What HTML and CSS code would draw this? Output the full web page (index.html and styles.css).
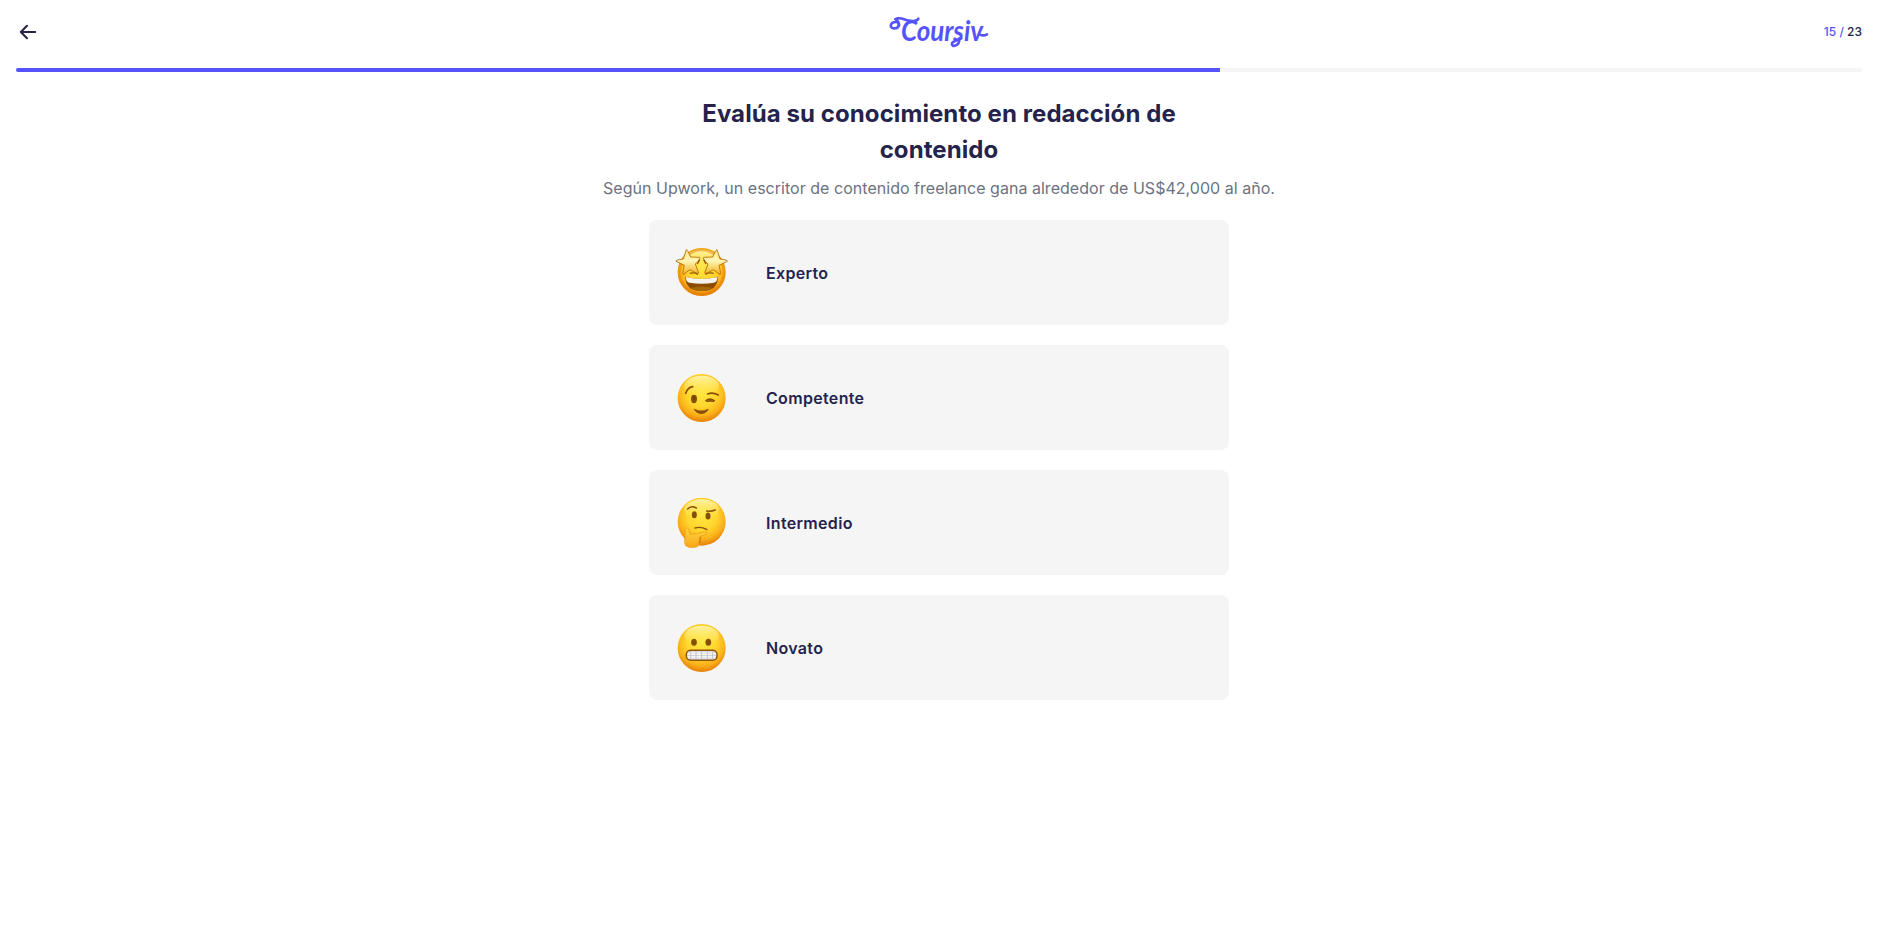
FILE: index.html
```html
<!DOCTYPE html>
<html lang="es">
<head>
<meta charset="utf-8">
<title>Coursiv</title>
<link rel="stylesheet" href="styles.css">
</head>
<body>
<svg class="defs" width="0" height="0" aria-hidden="true">
  <defs>
    <radialGradient id="rim" cx="125" cy="90" r="90" gradientUnits="userSpaceOnUse">
      <stop offset="0" stop-color="#ffe640"/><stop offset=".5" stop-color="#ffd62d"/><stop offset=".78" stop-color="#fbb21a"/><stop offset="1" stop-color="#e57f08"/>
    </radialGradient>
    <linearGradient id="shine" x1="0" y1="0" x2="0" y2="1">
      <stop offset="0" stop-color="#fffbc8" stop-opacity=".8"/><stop offset="1" stop-color="#ffee60" stop-opacity="0"/>
    </linearGradient>
    <linearGradient id="star" x1="0" y1="0" x2="0" y2="1">
      <stop offset="0" stop-color="#ffe680"/><stop offset=".45" stop-color="#fff5b5"/><stop offset="1" stop-color="#f5b018"/>
    </linearGradient>
    <linearGradient id="hand" x1="0" y1="0" x2="0" y2="1">
      <stop offset="0" stop-color="#ffd53c"/><stop offset="1" stop-color="#f9a51a"/>
    </linearGradient>
    <linearGradient id="teeth" x1="0" y1="0" x2="0" y2="1">
      <stop offset="0" stop-color="#d6d6d8"/><stop offset=".5" stop-color="#fff"/><stop offset="1" stop-color="#d2d2d8"/>
    </linearGradient>
    <g id="face">
      <circle cx="125" cy="108" r="72" fill="url(#rim)"/>
      <ellipse cx="125" cy="72" rx="52" ry="31" fill="url(#shine)"/>
    </g>
  </defs>
</svg>
<header class="header">
  <svg class="back" viewBox="0 0 24 24"><path d="M19.2 12H4.8M11 5.8L4.8 12L11 18.2"/></svg>
  <svg class="logo" viewBox="-3 0 360 150" role="img" aria-label="Coursiv">
    <path class="swash" d="M53 57C61 50 57 42 48 42C29 42 28 61 42 61C62 61 58 39 46 34C58 25 72 35 86 38C99 41 113 39 115 32"/>
    <text class="wordmark" x="63" y="98" textLength="246" lengthAdjust="spacingAndGlyphs">Coursiv</text>
    <path class="swash" d="M238 91C240 116 212 119 216 106C219 99 231 98 244 91"/>
    <path class="swash" d="M299 79C306 83 313 84 321 79"/>
  </svg>
  <div class="steps"><span class="current">15 / </span>23</div>
</header>
<div class="progress"><div class="bar" style="width:65.217%"></div></div>
<main class="quiz">
  <h1 class="title">Evalúa su conocimiento en redacción de contenido</h1>
  <p class="subtitle">Según Upwork, un escritor de contenido freelance gana alrededor de US$42,000 al año.</p>
  <div class="options">
    <button class="option">
      <svg class="emoji" viewBox="0 0 240 210">
        <use href="#face" y="-3"/>
        <circle cx="125" cy="105" r="67" fill="none" stroke="#e47b03" stroke-opacity=".45" stroke-width="10"/>
        <path d="M76 119Q125 133 174 119Q174 162 125 162Q76 162 76 119Z" fill="#8b4c00"/>
        <path d="M78 120Q125 132 172 120Q173 134 162 137Q125 143 88 137Q77 134 78 120Z" fill="#f5f3ed"/>
        <path d="M91 153Q125 144 159 153Q125 171 91 153Z" fill="#a56809"/>
        <path id="leftstar" d="M79 38Q83 39 92 60L119 61Q124 64 106 81L116 108Q114 113 90 98L70 113Q66 113 73 85L48 73Q45 69 70 66Z" fill="url(#star)" stroke="#ae6807" stroke-width="2.5" stroke-linejoin="round"/>
        <use href="#leftstar" transform="translate(250 0) scale(-1 1)"/>
        <path d="M89 109Q103 105 114 112M161 109Q147 105 136 112M119 68L112 81M131 68L138 81" fill="none" stroke="#9b5700" stroke-width="4"/>
      </svg>
      <span class="label">Experto</span>
    </button>
    <button class="option">
      <svg class="emoji" viewBox="0 0 240 210">
        <use href="#face"/>
        <g fill="none" stroke="#8c4f08" stroke-width="5" stroke-linecap="round">
          <path d="M77 94Q83 77 98 74M143 96Q158 90 175 99"/>
          <path d="M138 116Q149 107 163 116"/><path d="M142 118Q151 115 160 118"/>
        </g>
        <path d="M103 140Q124 151 144 140Q146 140 145 144Q136 156 124 156Q111 156 103 145Q101 141 103 140Z" fill="#8c4f08"/>
        <ellipse cx="102" cy="111" rx="9" ry="12.5" fill="#85500b"/><ellipse cx="102" cy="108" rx="4" ry="6" fill="#704006"/>
      </svg>
      <span class="label">Competente</span>
    </button>
    <button class="option">
      <svg class="emoji" viewBox="0 0 240 210">
        <use href="#face" y="-4"/>
        <g fill="none" stroke="#895009" stroke-width="4.5" stroke-linecap="round">
          <path d="M83 66Q93 54 109 63M140 72Q153 74 166 69"/>
          <path d="M105 123Q123 118 141 128" stroke-width="4"/>
        </g>
        <ellipse cx="103" cy="83" rx="7.5" ry="10.5" fill="#85500b"/><ellipse cx="144" cy="87" rx="7.5" ry="10.5" fill="#85500b"/>
        <path d="M76 127Q84 119 88 130L90 142Q112 141 134 134Q143 135 141 140Q138 144 121 149Q126 154 120 158Q125 164 117 168Q119 180 103 181Q87 184 77 176Q72 170 75 151Z" fill="url(#hand)" stroke="#ed9814" stroke-width="2"/>
        <path d="M119 150Q124 154 119 158Q123 163 116 168" fill="none" stroke="#b96b08" stroke-width="3"/>
      </svg>
      <span class="label">Intermedio</span>
    </button>
    <button class="option">
      <svg class="emoji" viewBox="0 0 240 210">
        <use href="#face"/>
        <ellipse cx="102" cy="91" rx="8.5" ry="10.5" fill="#85500b"/><ellipse cx="145" cy="91" rx="8.5" ry="10.5" fill="#85500b"/>
        <rect x="79" y="115" width="92" height="30" rx="13" fill="url(#teeth)" stroke="#8e5608" stroke-width="4.5"/>
        <path d="M81 130H169M92 117V143M108 117V143M125 117V143M142 117V143M158 117V143" stroke="#a9a9ad" stroke-width="1.7"/>
      </svg>
      <span class="label">Novato</span>
    </button>
  </div>
</main>
</body>
</html>
```
FILE: styles.css
```css
* { box-sizing: border-box; }
body { margin: 0; padding: 0 16px; background: #fff; color: #24234c; font-family: Inter, "Liberation Sans", sans-serif; }
.defs { display: block; }
.header { height: 68px; padding: 8px 0 10px; display: grid; grid-template-columns: 1fr 120px 1fr; align-items: start; }
.back { width: 24px; height: 24px; margin-top: 12px; fill: none; stroke: #24234c; stroke-width: 2; stroke-linecap: round; stroke-linejoin: round; }
.logo { width: 120px; height: 50px; }
.swash { fill: none; stroke: #5653fe; stroke-width: 8; stroke-linecap: round; stroke-linejoin: round; }
.wordmark { font-family: Lato, sans-serif; font-style: italic; font-weight: 700; font-size: 86px; fill: #5653fe; }
.steps { justify-self: end; margin-top: 15px; font-size: 12px; line-height: 18px; font-weight: 500; }
.current { color: #5653fe; }
.progress { height: 4px; border-radius: 4px; background: #f5f5f5; overflow: hidden; }
.bar { height: 100%; background: #5653fe; }
.quiz { display: flex; flex-direction: column; align-items: center; padding-top: 24px; }
.title { margin: 0; width: 580px; text-align: center; font-size: 24px; line-height: 36px; font-weight: 700; letter-spacing: 0.08px; }
.subtitle { margin: 8px 0 20px; font-size: 16px; line-height: 24px; color: #6b7280; letter-spacing: 0.03px; }
.options { width: 580px; display: flex; flex-direction: column; gap: 20px; }
.option { height: 105px; padding: 0 11px; border: 0; border-radius: 8px; background: #f5f5f5; display: flex; align-items: center; gap: 26px; color: inherit; font-family: inherit; text-align: left; }
.emoji { width: 80px; height: 70px; margin-bottom: 1px; }
.label { font-size: 16px; line-height: 24px; font-weight: 600; letter-spacing: 0.33px; }
```
